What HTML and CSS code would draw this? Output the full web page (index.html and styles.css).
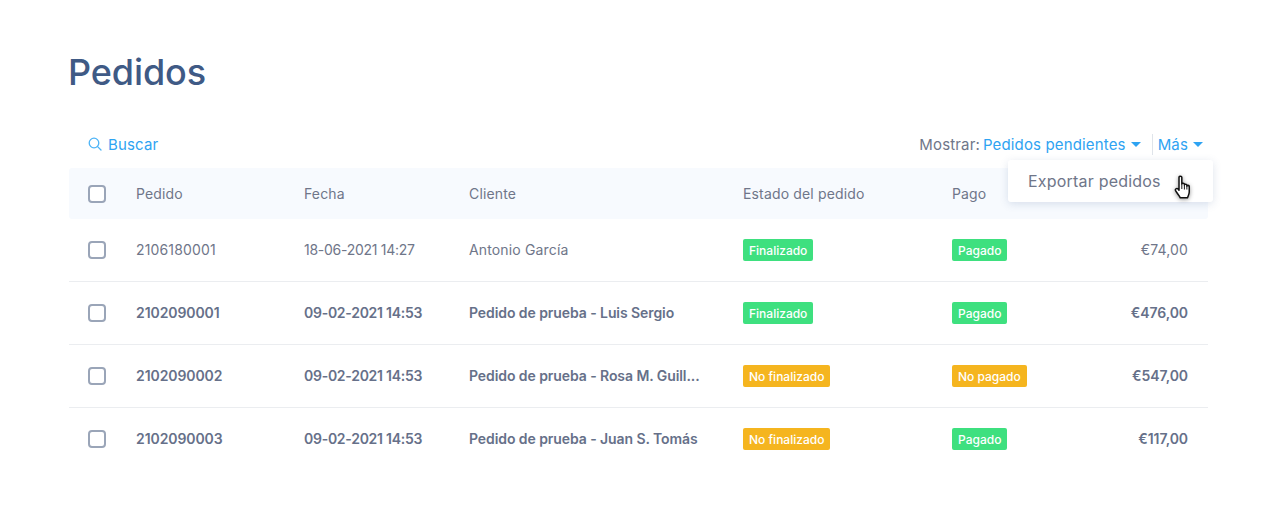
FILE: index.html
```html
<!DOCTYPE html>
<html lang="es">
<head>
<meta charset="utf-8">
<title>Pedidos</title>
<link rel="stylesheet" href="styles.css">
</head>
<body>
<main class="page">
  <h1 class="title">Pedidos</h1>
  <div class="toolbar">
    <a class="search">
      <svg class="search-icon" width="14" height="14" viewBox="0 0 14 14" fill="none" stroke="#4db4f7" stroke-width="1.3"><circle cx="6" cy="6" r="4.8"/><path d="M9.6 9.600 L13 13" stroke-linecap="round"/></svg>
      Buscar
    </a>
    <div class="filters">
      <span class="label">Mostrar:</span>
      <a class="link">Pedidos pendientes<i class="caret"></i></a>
      <span class="sep"></span>
      <a class="link">Más<i class="caret"></i></a>
    </div>
    <div class="menu">
      <span>Exportar pedidos</span>
      <svg class="hand" width="20" height="26" viewBox="0 0 20 26"><path d="M6.300 2.200c0-1.500 2.600-1.500 2.600 0v6.300c0-1.200 2.400-1.200 2.400.1v.8c0-1.200 2.300-1.200 2.300.1v.9c0-1.100 2.200-1.100 2.200.3v5.200c0 2-1 3.400-1.600 5.200H7.400c-.7-2-2.400-3.300-4.200-6.400-.9-1.600 1-3 2.300-1.600l.8 1z" fill="#fff" stroke="#111" stroke-width="1.400" stroke-linejoin="round"/><path d="M8.900 9v4M11.300 9.500v4M13.600 10.500v3" stroke="#111" stroke-width=".9"/></svg>
    </div>
  </div>
  <div class="row head">
    <span class="check"></span><span>Pedido</span><span>Fecha</span><span>Cliente</span><span>Estado del pedido</span><span>Pago</span><span></span>
  </div>
  <div class="row">
    <span class="check"></span><span>2106180001</span><span class="date">18-06-2021 14:27</span><span>Antonio García</span><span><b class="tag ok">Finalizado</b></span><span><b class="tag ok">Pagado</b></span><span class="amount">€74,00</span>
  </div>
  <div class="row strong">
    <span class="check"></span><span>2102090001</span><span class="date">09-02-2021 14:53</span><span>Pedido de prueba - Luis Sergio</span><span><b class="tag ok">Finalizado</b></span><span><b class="tag ok">Pagado</b></span><span class="amount">€476,00</span>
  </div>
  <div class="row strong">
    <span class="check"></span><span>2102090002</span><span class="date">09-02-2021 14:53</span><span>Pedido de prueba - Rosa M. Guill...</span><span><b class="tag warn">No finalizado</b></span><span><b class="tag warn">No pagado</b></span><span class="amount">€547,00</span>
  </div>
  <div class="row strong last">
    <span class="check"></span><span>2102090003</span><span class="date">09-02-2021 14:53</span><span>Pedido de prueba - Juan S. Tomás</span><span><b class="tag warn">No finalizado</b></span><span><b class="tag ok">Pagado</b></span><span class="amount">€117,00</span>
  </div>
</main>
</body>
</html>
```
FILE: styles.css
```css
* { box-sizing: border-box; }
html, body { margin: 0; background: #fff; }
body { font-family: "Inter", "Liberation Sans", sans-serif; font-size: 14px; color: #6f7689; overflow: hidden; height: 522px; }
.page { width: 1139px; margin-left: 69px; padding-top: 49px; }
.title { margin: 0 0 0 -1px; font-size: 36px; line-height: 46px; font-weight: 500; color: #3f5a85; letter-spacing: -0.1px; }
.toolbar { position: relative; display: flex; justify-content: space-between; align-items: center; height: 73px; padding: 25px 5px 0 19px; font-size: 15px; letter-spacing: .15px; }
.search, .link { color: #2ea3f2; }
.search { display: flex; align-items: center; gap: 6px; }
.filters { display: flex; align-items: center; }
.label { margin-right: 3px; }
.caret { display: inline-block; width: 0; height: 0; margin-left: 5px; vertical-align: 3px; border-left: 5px solid transparent; border-right: 5px solid transparent; border-top: 5px solid #2ea3f2; }
.sep { width: 1px; height: 21px; background: #dfe4ea; margin: 0 5px 0 11px; }
.menu { position: absolute; z-index: 2; left: 939px; top: 65px; width: 205px; height: 42px; display: flex; align-items: center; padding-left: 20px; background: #fff; border-radius: 3px; box-shadow: 0 2px 8px rgba(70, 100, 150, .18); font-size: 16px; letter-spacing: .2px; color: #6f7689; }
.hand { position: absolute; left: 164px; top: 15px; width: 22px; height: 28px; filter: drop-shadow(0 1px 2px rgba(0,0,0,.4)); }
.row { display: grid; grid-template-columns: 48px 168px 165px 274px 209px 1fr auto; align-items: center; height: 63px; padding: 0 20px 0 19px; border-bottom: 1px solid #ebedf0; line-height: 16px; letter-spacing: .15px; }
.head { height: 51px; background: #f7fafe; border-bottom: 0; border-radius: 3px; }
.row.last { border-bottom-color: transparent; }
.strong { font-weight: 600; color: #667089; letter-spacing: -.08px; }
.date { letter-spacing: -.27px; }
.check { width: 18px; height: 18px; border: 2px solid #9aa5b8; border-radius: 4px; background: #fff; }
.amount { text-align: right; }
.tag { display: inline-block; height: 22px; line-height: 23px; padding: 0 6px; border-radius: 2px; font-size: 12px; font-weight: 500; letter-spacing: 0; color: #fff; }
.ok { background: #3ee07f; }
.warn { background: #f5b51f; }
```
